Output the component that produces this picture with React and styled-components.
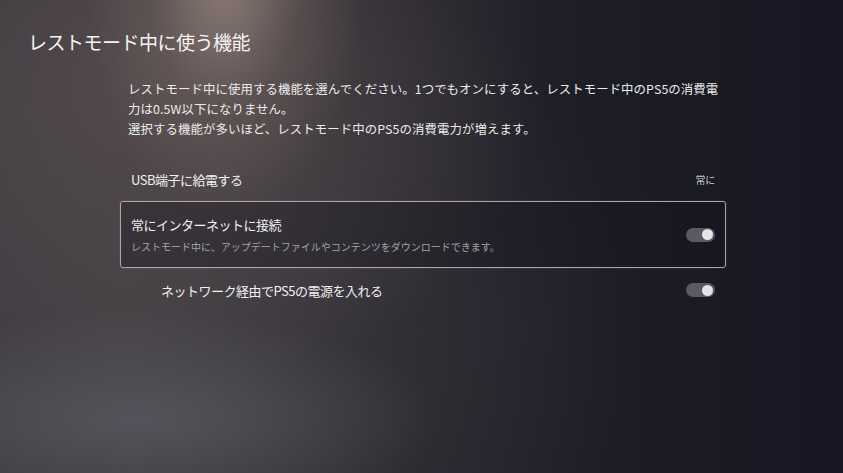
import React, { useState } from 'react';
import styled, { createGlobalStyle } from 'styled-components';

const GlobalStyle = createGlobalStyle`
  html, body {
    margin: 0;
    padding: 0;
    background: #1b1b24;
  }
  * {
    box-sizing: border-box;
  }
`;

const Screen = styled.div`
  width: 843px;
  height: 473px;
  overflow: hidden;
  font-family: "Noto Sans CJK JP", "Noto Sans", sans-serif;
  color: #f2f2f2;
  background:
    radial-gradient(ellipse 140px 250px at 225px -30px, rgba(165, 145, 136, 0.75), rgba(120, 105, 100, 0.35) 55%, rgba(80, 70, 70, 0) 100%),
    radial-gradient(ellipse 380px 330px at 170px 60px, rgba(110, 95, 92, 0.55), rgba(70, 62, 64, 0) 100%),
    radial-gradient(ellipse 300px 110px at 140px 420px, rgba(92, 95, 102, 0.7), rgba(70, 72, 78, 0) 100%),
    radial-gradient(ellipse 520px 420px at 120px 330px, rgba(72, 68, 72, 0.8), rgba(50, 48, 54, 0) 100%),
    linear-gradient(90deg, #34313a 0%, #25242c 45%, #1a1b24 80%, #161723 100%);
`;

const Title = styled.h1`
  margin: 0;
  padding: 29px 0 0 28px;
  font-size: 19px;
  font-weight: 400;
  line-height: 26px;
  letter-spacing: -0.5px;
  color: #f4f4f4;
`;

const Content = styled.div`
  width: 606px;
  margin: 24px 0 0 120px;
  display: flex;
  flex-direction: column;
`;

const Description = styled.p`
  margin: 0 0 0 8px;
  font-size: 12.4px;
  line-height: 20px;
  letter-spacing: 0.1px;
  color: #ececec;
`;

const List = styled.div`
  margin-top: 18px;
  display: flex;
  flex-direction: column;
`;

const Row = styled.div`
  display: flex;
  align-items: center;
  justify-content: space-between;
  min-height: ${p => (p.$focused ? '67px' : '44px')};
  padding: ${p => (p.$indent ? '0 10px 0 40px' : '0 10px 0 10px')};
  border: 1px solid ${p => (p.$focused ? '#b5a2a6' : 'transparent')};
  border-radius: 3px;
  background: ${p => (p.$focused ? 'rgba(20, 20, 28, 0.35)' : 'transparent')};
  box-shadow: ${p => (p.$focused ? '0 0 2px rgba(220, 190, 200, 0.25)' : 'none')};
`;

const Labels = styled.div`
  display: flex;
  flex-direction: column;
  gap: 7px;
`;

const Label = styled.span`
  font-size: 13px;
  line-height: 17px;
  letter-spacing: -0.5px;
  color: #f0f0f0;
`;

const Sub = styled.span`
  font-size: 10px;
  line-height: 13px;
  letter-spacing: 0px;
  color: #a3a3a8;
`;

const Value = styled.span`
  font-size: 10px;
  color: #c8c8cc;
  letter-spacing: -0.2px;
`;

const Toggle = styled.button`
  position: relative;
  width: 29px;
  height: 14px;
  padding: 0;
  border: none;
  border-radius: 7px;
  background: #5a5b61;
  cursor: pointer;

  &::after {
    content: '';
    position: absolute;
    top: 1.5px;
    left: ${p => (p.$on ? '16px' : '2px')};
    width: 11px;
    height: 11px;
    border-radius: 50%;
    background: #e4e4e6;
  }
`;

const items = [
  { id: 'usb', label: 'USB端子に給電する', value: '常に' },
  {
    id: 'net',
    label: '常にインターネットに接続',
    sub: 'レストモード中に、アップデートファイルやコンテンツをダウンロードできます。',
    toggle: true,
    focused: true,
  },
  { id: 'power', label: 'ネットワーク経由でPS5の電源を入れる', toggle: true, indent: true },
];

const App = () => {
  const [state, setState] = useState({ net: true, power: true });

  return (
    <>
      <GlobalStyle />
      <Screen>
        <Title>レストモード中に使う機能</Title>
        <Content>
          <Description>
            レストモード中に使用する機能を選んでください。1つでもオンにすると、レストモード中のPS5の消費電
            <br />
            力は0.5W以下になりません。
            <br />
            選択する機能が多いほど、レストモード中のPS5の消費電力が増えます。
          </Description>
          <List>
            {items.map(item => (
              <Row key={item.id} $focused={item.focused} $indent={item.indent}>
                <Labels>
                  <Label>{item.label}</Label>
                  {item.sub && <Sub>{item.sub}</Sub>}
                </Labels>
                {item.value && <Value>{item.value}</Value>}
                {item.toggle && (
                  <Toggle
                    $on={state[item.id]}
                    aria-label={item.label}
                    onClick={() => setState(s => ({ ...s, [item.id]: !s[item.id] }))}
                  />
                )}
              </Row>
            ))}
          </List>
        </Content>
      </Screen>
    </>
  );
};

export default App;
